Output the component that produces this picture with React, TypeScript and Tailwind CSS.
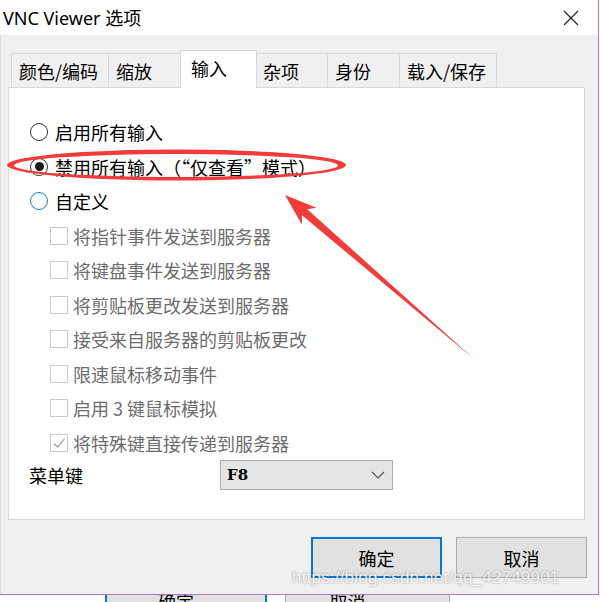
import React from 'react';

const FONT = '"Noto Sans", "Noto Sans CJK SC", sans-serif';
const CJK = '"Noto Sans CJK SC", "Noto Sans", sans-serif';

const tabs = [
  { label: '颜色/编码', w: 'w-[98px]' },
  { label: '缩放', w: 'w-[75px]' },
  { label: '输入', w: 'w-[73px]', active: true },
  { label: '杂项', w: 'w-[73px]' },
  { label: '身份', w: 'w-[73px]' },
  { label: '载入/保存', w: 'w-[98px]' },
];

const checks = [
  { label: '将指针事件发送到服务器' },
  { label: '将键盘事件发送到服务器' },
  { label: '将剪贴板更改发送到服务器' },
  { label: '接受来自服务器的剪贴板更改' },
  { label: '限速鼠标移动事件' },
  { label: '启用 3 键鼠标模拟' },
  { label: '将特殊键直接传递到服务器', checked: true },
];

const Radio = ({ state }: { state: 'off' | 'on' | 'hover' }) => (
  <div
    className={
      'w-[18px] h-[18px] rounded-full border-[1.5px] bg-white flex items-center justify-center ' +
      (state === 'hover' ? 'border-[#1a7fd9]' : 'border-[#333333]')
    }
  >
    {state === 'on' && <div className="w-[9px] h-[9px] rounded-full bg-[#1b1b1b]" />}
  </div>
);

const Checkbox = ({ checked }: { checked?: boolean }) => (
  <div className="w-[18px] h-[18px] border-[1.5px] border-[#cccccc] bg-white flex items-center justify-center">
    {checked && (
      <svg width="14" height="14" viewBox="0 0 14 14">
        <path d="M2 7.5 L5.5 11 L12.5 3" fill="none" stroke="#a8a8a8" strokeWidth="1.4" />
      </svg>
    )}
  </div>
);

const App: React.FC = () => {
  return (
    <div className="w-[600px] h-[602px] bg-white relative overflow-hidden text-black" style={{ fontFamily: FONT }}>
      <div className="w-[599px] h-[595px] flex flex-col border-r border-b border-[#b676cf]">
        {/* title bar */}
        <div className="h-[35px] bg-white flex items-center justify-between pl-[3px] pr-[19px]">
          <span className="text-[18px] leading-none">VNC Viewer 选项</span>
          <svg width="16" height="16" viewBox="0 0 16 16">
            <path d="M1 1 L15 15 M15 1 L1 15" stroke="#222" strokeWidth="1.2" />
          </svg>
        </div>

        {/* body */}
        <div className="flex-1 bg-[#f0f0f0] border-l border-[#dcdcdc] pl-[7px] pr-[13px] flex flex-col" style={{ fontFamily: CJK }}>
          <div className="mt-[18px] h-[34px] flex items-end ml-[3px]">
            {tabs.map((t) =>
              t.active ? (
                <div
                  key={t.label}
                  className="w-[77px] -mx-[2px] h-[38px] -mb-[1px] relative z-10 bg-white border-t border-x border-[#d9d9d9] pl-[10px] pt-[6px] text-[18px] leading-[22px]"
                >
                  {t.label}
                </div>
              ) : (
                <div
                  key={t.label}
                  className={t.w + ' h-[34px] bg-[#f0f0f0] border-t border-l border-r border-[#d9d9d9] -mr-[1px] pl-[7px] flex items-center text-[18px] leading-none'}
                >
                  {t.label}
                </div>
              )
            )}
          </div>

          {/* panel */}
          <div className="h-[433px] bg-white border border-[#d9d9d9] pt-[27px]">
            <div className="h-[34.5px] flex items-center pl-[21px] gap-[7px] text-[18px] leading-none">
              <Radio state="off" />
              <span>启用所有输入</span>
            </div>
            <div className="h-[34.5px] flex items-center pl-[21px] gap-[7px] text-[18px] leading-none">
              <Radio state="on" />
              <span>禁用所有输入（“仅查看”模式）</span>
            </div>
            <div className="h-[34.5px] flex items-center pl-[21px] gap-[7px] text-[18px] leading-none">
              <Radio state="hover" />
              <span>自定义</span>
            </div>
            {checks.map((c) => (
              <div key={c.label} className="h-[34.5px] flex items-center pl-[41px] gap-[5px] text-[18px] leading-none text-[#6d6d6d]">
                <Checkbox checked={c.checked} />
                <span>{c.label}</span>
              </div>
            ))}
            <div className="h-[30px] flex items-center pl-[20px] text-[18px] leading-none">
              <span className="w-[191px]">菜单键</span>
              <div className="w-[173px] h-[30px] bg-[#e5e5e5] border border-[#adadad] flex items-center justify-between pl-[6px] pr-[7px]">
                <span className="text-[15px] font-bold" style={{ fontFamily: '"DejaVu Serif", "Liberation Serif", serif' }}>F8</span>
                <svg width="14" height="8" viewBox="0 0 14 8">
                  <path d="M1 1 L7 7 L13 1" fill="none" stroke="#555" strokeWidth="1.2" />
                </svg>
              </div>
            </div>
          </div>

          {/* buttons */}
          <div className="mt-[17px] flex justify-end gap-[14px] -mr-[2px]">
            <button className="w-[131px] h-[41px] bg-[#e1e1e1] border-2 border-[#0078d7] text-[18px] leading-none">确定</button>
            <button className="w-[131px] h-[41px] bg-[#e1e1e1] border border-[#adadad] text-[18px] leading-none">取消</button>
          </div>
        </div>
      </div>

      {/* window underneath */}
      <div className="h-[7px] flex overflow-hidden" style={{ fontFamily: CJK }}>
        <div className="ml-[105px] w-[162px] h-[40px] bg-[#e1e1e1] border-x-2 border-[#0078d7] flex justify-center text-[18px] leading-none -mt-[3px]">
          <span className="ml-[-20px]">确定</span>
        </div>
        <div className="ml-[18px] w-[165px] h-[40px] bg-[#e1e1e1] border-x border-[#adadad] flex justify-center text-[18px] leading-none -mt-[3px]">
          <span className="ml-[-40px]">取消</span>
        </div>
      </div>

      {/* watermark */}
      <div
        className="absolute left-[292px] top-[565px] text-[17px] text-white/90 tracking-[0.2px]"
        style={{ fontFamily: '"Liberation Sans", Arial, sans-serif', textShadow: '0 0 2px rgba(0,0,0,0.45)' }}
      >
        https://blog.csdn.net/qq_42749901
      </div>

      {/* annotation */}
      <svg className="absolute inset-0 pointer-events-none" width="600" height="602" viewBox="0 0 600 602">
        <path
          fillRule="evenodd"
          fill="#f23b3b"
          d="M7 165 A169.5 15.5 0 1 0 346 165 A169.5 15.5 0 1 0 7 165 Z M14 165.5 A162 11.5 0 1 0 338 165.5 A162 11.5 0 1 0 14 165.5 Z"
        />
        <polygon fill="#f23b3b" points="285,195 301.8,224.4 302,215.2 474,359 307.2,209.2 316.4,207.8" />
      </svg>
    </div>
  );
};

export default App;
